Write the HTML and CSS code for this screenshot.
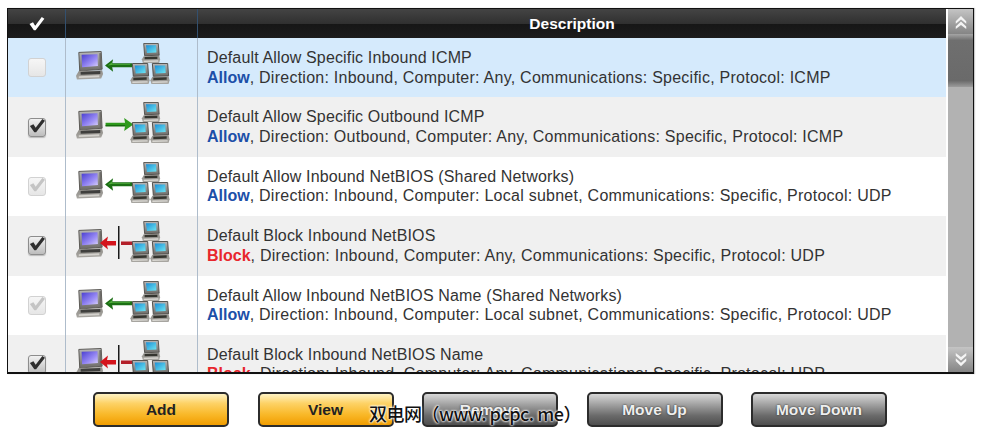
FILE: index.html
```html
<!DOCTYPE html>
<html lang="en">
<head>
  <meta charset="UTF-8">
  <meta name="viewport" content="width=device-width, initial-scale=1.0">
  <title>Firewall Rules</title>
  <link rel="stylesheet" href="styles.css">
</head>
<body>
  <svg class="defs" width="0" height="0">
    <defs>
      <linearGradient id="bigScreen" x1="0" y1="0" x2="1" y2="1">
        <stop offset="0" stop-color="#4a3fd0"/>
        <stop offset="0.6" stop-color="#9a8cf5"/>
        <stop offset="1" stop-color="#d8d0fa"/>
      </linearGradient>
      <linearGradient id="smallScreen" x1="0" y1="0" x2="1" y2="1">
        <stop offset="0" stop-color="#1c8fd6"/>
        <stop offset="1" stop-color="#6fe6f2"/>
      </linearGradient>
      <linearGradient id="case" x1="0" y1="0" x2="0" y2="1">
        <stop offset="0" stop-color="#b8b8b8"/>
        <stop offset="1" stop-color="#6c6a66"/>
      </linearGradient>
      <linearGradient id="base" x1="0" y1="0" x2="0" y2="1">
        <stop offset="0" stop-color="#8f8d88"/>
        <stop offset="1" stop-color="#a9a7a2"/>
      </linearGradient>
      <symbol id="bigPc" viewBox="0 0 30 30">
        <path d="M3 1 L27 0 L28 19 L4 21 Z" fill="url(#case)" stroke="#55534f" stroke-width="1"/>
        <path d="M6 3.500 L23 3 L23.500 15.500 L6.500 17 Z" fill="url(#bigScreen)"/>
        <path d="M25 2 L27 1.500 L27.500 18 L25.500 18.500 Z" fill="#6d6b67"/>
        <path d="M3 21 L28 20 L29 24 L27 29 L1 30 L0 26 Z" fill="url(#base)"/>
        <path d="M5 22 L26 21 L26 24 L5 25 Z" fill="#3f3f3d"/>
        <path d="M3 26.500 L25 25.500 L25 27.500 L3 28.500 Z" fill="#d4d2cd"/>
      </symbol>
      <symbol id="smallPc" viewBox="0 0 20 22">
        <path d="M2 0.500 L18 0.500 L19 13.500 L3 14 Z" fill="url(#case)" stroke="#4e4c48" stroke-width="1"/>
        <path d="M4.500 2.500 L15.500 2.500 L16 10.500 L5.500 11 Z" fill="url(#smallScreen)"/>
        <path d="M2 14.500 L19 14 L20 18 L19 22 L1 22 L0 18 Z" fill="url(#base)"/>
        <path d="M3 15.500 L17 15 L17 17.500 L3 18 Z" fill="#35352f"/>
        <path d="M2 19.500 L18 19 L18 20.500 L2 21 Z" fill="#dbd9d4"/>
      </symbol>
      <symbol id="network" viewBox="0 0 40 42">
        <use href="#smallPc" x="11" y="0" width="20" height="20"/>
        <use href="#smallPc" x="0" y="20" width="20" height="21"/>
        <use href="#smallPc" x="20" y="20" width="20" height="21"/>
      </symbol>
      <symbol id="arrowIn" viewBox="0 0 30 14">
        <path d="M0 7 L9 0 L8 4.500 L30 4.500 L30 9 L8 9 L9 14 Z" fill="#1b6f14"/>
        <path d="M3 7 L8 3.500 L8 5.500 L28 5.500 L28 6.500 L7 6.500 Z" fill="#4fae3a"/>
      </symbol>
      <symbol id="arrowOut" viewBox="0 0 30 14">
        <path d="M0 5 L21 5 L20 0 L30 7 L20 14 L21 9 L0 9 Z" fill="#2e9a1c"/>
        <path d="M0 7.500 L21 7.500 L21 9 L0 9 Z" fill="#17690f"/>
      </symbol>
      <symbol id="arrowBlock" viewBox="0 0 32 34">
        <path d="M0 17 L8 10.500 L7 15 L16 15 L16 19.500 L7 19.500 L8 23.500 Z" fill="#d4141c"/>
        <rect x="18" y="0" width="1.500" height="33" fill="#1a1a1a"/>
        <rect x="21" y="15.500" width="11" height="3.500" fill="#b3202a"/>
      </symbol>
      <symbol id="check" viewBox="0 0 18 16">
        <path d="M1 8 L5 6 L7.500 10 L15 0 L18 2 L8 15 L6 15 Z"/>
      </symbol>
      <symbol id="chevronsUp" viewBox="0 0 16 16">
        <path d="M2 7 L8 1 L14 7 L14 10 L8 5 L2 10 Z M2 13 L8 7.500 L14 13 L14 16 L8 11.500 L2 16 Z" fill="#f4f4f4"/>
      </symbol>
      <symbol id="chevronsDown" viewBox="0 0 16 16">
        <path d="M2 0 L8 4.500 L14 0 L14 3 L8 8.500 L2 3 Z M2 6 L8 11 L14 6 L14 9 L8 15 L2 9 Z" fill="#f4f4f4"/>
      </symbol>
    </defs>
  </svg>

  <div class="rules-panel">
    <div class="rules-main">
      <div class="rules-head">
        <div class="head-check"><svg class="head-tick"><use href="#check"/></svg></div>
        <div class="head-icon"></div>
        <div class="head-desc">Description</div>
      </div>

      <div class="rule-row selected">
        <div class="cell-check"><span class="tickbox disabled"></span></div>
        <div class="cell-icon">
          <svg class="rule-icon" viewBox="0 0 94 44">
            <use href="#bigPc" x="0" y="8" width="28" height="29"/>
            <use href="#arrowIn" x="29" y="16" width="27" height="13"/>
            <use href="#network" x="54" y="0" width="40" height="42"/>
          </svg>
        </div>
        <div class="cell-desc">
          <div class="rule-name">Default Allow Specific Inbound ICMP</div>
          <div class="rule-info"><b class="allow">Allow</b>, Direction: Inbound, Computer: Any, Communications: Specific, Protocol: ICMP</div>
        </div>
      </div>

      <div class="rule-row shaded">
        <div class="cell-check"><span class="tickbox"><svg class="tick"><use href="#check"/></svg></span></div>
        <div class="cell-icon">
          <svg class="rule-icon" viewBox="0 0 94 44">
            <use href="#bigPc" x="0" y="8" width="28" height="29"/>
            <use href="#arrowOut" x="29" y="16" width="29" height="13"/>
            <use href="#network" x="54" y="0" width="40" height="42"/>
          </svg>
        </div>
        <div class="cell-desc">
          <div class="rule-name">Default Allow Specific Outbound ICMP</div>
          <div class="rule-info"><b class="allow">Allow</b>, Direction: Outbound, Computer: Any, Communications: Specific, Protocol: ICMP</div>
        </div>
      </div>

      <div class="rule-row">
        <div class="cell-check"><span class="tickbox disabled"><svg class="tick"><use href="#check"/></svg></span></div>
        <div class="cell-icon">
          <svg class="rule-icon" viewBox="0 0 94 44">
            <use href="#bigPc" x="0" y="8" width="28" height="29"/>
            <use href="#arrowIn" x="29" y="16" width="27" height="13"/>
            <use href="#network" x="54" y="0" width="40" height="42"/>
          </svg>
        </div>
        <div class="cell-desc">
          <div class="rule-name">Default Allow Inbound NetBIOS (Shared Networks)</div>
          <div class="rule-info"><b class="allow">Allow</b>, Direction: Inbound, Computer: Local subnet, Communications: Specific, Protocol: UDP</div>
        </div>
      </div>

      <div class="rule-row shaded">
        <div class="cell-check"><span class="tickbox"><svg class="tick"><use href="#check"/></svg></span></div>
        <div class="cell-icon">
          <svg class="rule-icon" viewBox="0 0 94 44">
            <use href="#bigPc" x="0" y="8" width="28" height="29"/>
            <use href="#arrowBlock" x="24" y="5" width="32" height="34"/>
            <use href="#network" x="54" y="0" width="40" height="42"/>
          </svg>
        </div>
        <div class="cell-desc">
          <div class="rule-name">Default Block Inbound NetBIOS</div>
          <div class="rule-info"><b class="block">Block</b>, Direction: Inbound, Computer: Any, Communications: Specific, Protocol: UDP</div>
        </div>
      </div>

      <div class="rule-row">
        <div class="cell-check"><span class="tickbox disabled"><svg class="tick"><use href="#check"/></svg></span></div>
        <div class="cell-icon">
          <svg class="rule-icon" viewBox="0 0 94 44">
            <use href="#bigPc" x="0" y="8" width="28" height="29"/>
            <use href="#arrowIn" x="29" y="16" width="27" height="13"/>
            <use href="#network" x="54" y="0" width="40" height="42"/>
          </svg>
        </div>
        <div class="cell-desc">
          <div class="rule-name">Default Allow Inbound NetBIOS Name (Shared Networks)</div>
          <div class="rule-info"><b class="allow">Allow</b>, Direction: Inbound, Computer: Local subnet, Communications: Specific, Protocol: UDP</div>
        </div>
      </div>

      <div class="rule-row shaded">
        <div class="cell-check"><span class="tickbox"><svg class="tick"><use href="#check"/></svg></span></div>
        <div class="cell-icon">
          <svg class="rule-icon" viewBox="0 0 94 44">
            <use href="#bigPc" x="0" y="8" width="28" height="29"/>
            <use href="#arrowBlock" x="24" y="5" width="32" height="34"/>
            <use href="#network" x="54" y="0" width="40" height="42"/>
          </svg>
        </div>
        <div class="cell-desc">
          <div class="rule-name">Default Block Inbound NetBIOS Name</div>
          <div class="rule-info"><b class="block">Block</b>, Direction: Inbound, Computer: Any, Communications: Specific, Protocol: UDP</div>
        </div>
      </div>
    </div>

    <div class="scrollbar">
      <div class="scroll-btn"><svg class="chevrons"><use href="#chevronsUp"/></svg></div>
      <div class="scroll-track"><div class="scroll-thumb"></div></div>
      <div class="scroll-btn"><svg class="chevrons"><use href="#chevronsDown"/></svg></div>
    </div>
  </div>

  <div class="button-bar">
    <button class="btn gold" type="button">Add</button>
    <button class="btn gold" type="button">View</button>
    <button class="btn dark" type="button">Remove</button>
    <button class="btn dark" type="button">Move Up</button>
    <button class="btn dark" type="button">Move Down</button>
  </div>

  <div class="watermark">双电网（www. pcpc. me）</div>
</body>
</html>
```

FILE: styles.css
```css
* {
  box-sizing: border-box;
  margin: 0;
  padding: 0;
}

body {
  position: relative;
  width: 983px;
  height: 438px;
  padding: 8px 9px 0 7px;
  background-color: #ffffff;
  font-family: "Liberation Sans", Arial, sans-serif;
  overflow: hidden;
}

.defs {
  position: absolute;
}

.rules-panel {
  display: flex;
  height: 366px;
  border: 1px solid #111;
  border-width: 1px 1px 2px 1px;
  box-shadow: 1px 0 1px #ccc;
}

.rules-main {
  flex: 1;
  min-width: 0;
  height: 100%;
  overflow: hidden;
}

.rules-head {
  display: grid;
  grid-template-columns: 58px 132px 1fr;
  height: 29px;
  background: linear-gradient(#444 0, #303030 50%, #161616 52%, #1c1c1c 100%);
  color: #fff;
  font-size: 15.5px;
  font-weight: bold;
}

.head-check,
.head-icon {
  border-right: 1px solid #33506f;
}

.head-check {
  display: flex;
  justify-content: center;
  align-items: center;
}

.head-tick {
  width: 17px;
  height: 14px;
  fill: #fff;
}

.head-desc {
  display: flex;
  justify-content: center;
  align-items: center;
}

.rule-row {
  display: grid;
  grid-template-columns: 58px 132px 1fr;
  height: 59.4px;
  background: #fff;
}

.rule-row.shaded {
  background: #f0f0f0;
}

.rule-row.selected {
  background: #d5eafc;
}

.cell-check,
.cell-icon {
  border-right: 1px solid #aebccb;
}

.cell-check {
  display: flex;
  justify-content: center;
  align-items: center;
}

.tickbox {
  display: flex;
  align-items: center;
  justify-content: center;
  width: 18px;
  height: 19px;
  border: 1px solid #8d8d8d;
  border-radius: 3px;
  background: linear-gradient(#f2f2f2, #bdbdbd);
  box-shadow: 0 1px 1px #bbb;
}

.tick {
  width: 18px;
  height: 16px;
  margin-top: -3px;
  fill: #2e2e2e;
}

.tickbox.disabled {
  border-color: #d2d2d2;
  background: linear-gradient(#f6f6f6, #e6e6e6);
  box-shadow: none;
}

.tickbox.disabled .tick {
  fill: #c4c4c4;
}

.cell-icon {
  padding: 5px 0 0 10px;
}

.rule-icon {
  display: block;
  width: 94px;
  height: 44px;
}

.cell-desc {
  padding: 10px 0 0 9px;
  color: #333;
  font-size: 16px;
  line-height: 19.5px;
  white-space: nowrap;
}

.rule-name {
  letter-spacing: 0.15px;
}

.rule-info {
  letter-spacing: 0.25px;
}

.allow,
.block {
  letter-spacing: 0;
}

.allow {
  color: #1c4fa8;
}

.block {
  color: #e8262c;
}

.scrollbar {
  display: flex;
  flex-direction: column;
  flex: 0 0 25px;
  margin-left: 2px;
  background: #b2b2b2;
}

.scroll-btn {
  display: flex;
  flex: 0 0 25px;
  align-items: center;
  justify-content: center;
  background: linear-gradient(#c4c4c4, #858585);
}

.chevrons {
  width: 14px;
  height: 14px;
}

.scroll-track {
  flex: 1;
}

.scroll-thumb {
  height: 53px;
  background: linear-gradient(#a5a5a5 0, #6f6f6f 12%, #6a6a6a 88%, #9c9c9c 100%);
}

.button-bar {
  display: flex;
  gap: 28.5px;
  margin: 18px 0 0 86px;
}

.btn {
  width: 136px;
  height: 35px;
  border: 2px solid #2c2c2c;
  border-radius: 5px;
  font-family: "Liberation Sans", Arial, sans-serif;
  font-size: 15.5px;
  font-weight: bold;
  cursor: pointer;
}

.btn.gold {
  background: linear-gradient(#fff3c4 0, #fdd266 30%, #f9b92a 65%, #f19d00 100%);
  color: #222;
}

.btn.dark {
  background: linear-gradient(#d8d8d8 0, #a0a0a0 35%, #6a6a6a 70%, #4e4e4e 100%);
  color: #eee;
  text-shadow: 0 0 2px #222;
}

.watermark {
  position: absolute;
  left: 369px;
  top: 400px;
  color: #111;
  font-family: "Noto Sans CJK SC", sans-serif;
  font-size: 18px;
  font-weight: 500;
  letter-spacing: -0.5px;
  line-height: 26px;
  white-space: nowrap;
  text-shadow: 0 0 2px #fff, 0 0 2px #fff, 0 0 3px #fff;
}
```
